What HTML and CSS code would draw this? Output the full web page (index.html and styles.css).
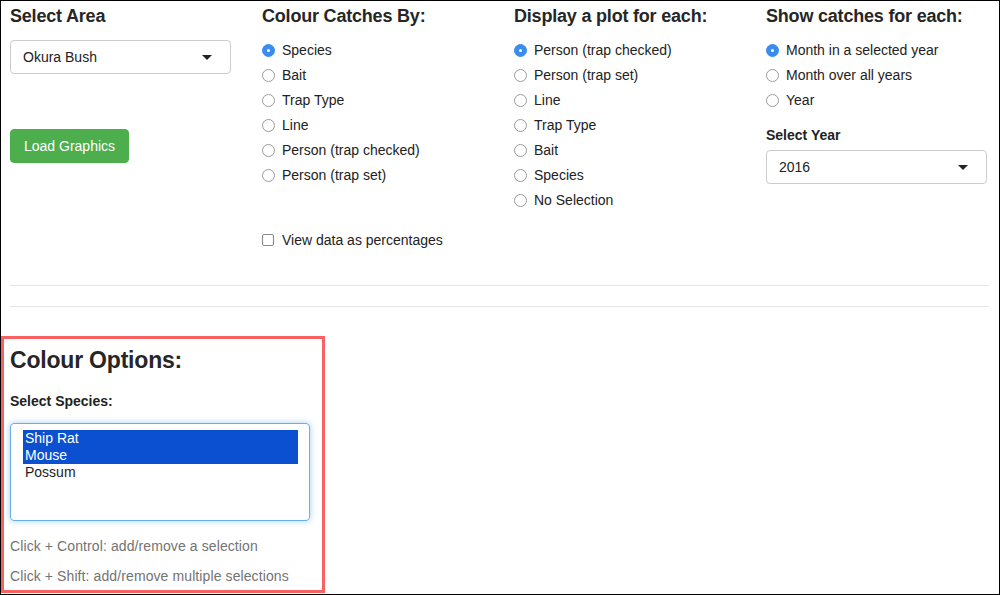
FILE: index.html
```html
<!DOCTYPE html>
<html>
<head>
<meta charset="utf-8">
<link rel="stylesheet" href="styles.css">
</head>
<body>
<div class="frame">
  <div class="controls">
    <div class="col">
      <div class="heading">Select Area</div>
      <div class="select"><span>Okura Bush</span><span class="caret"></span></div>
      <div class="btn">Load Graphics</div>
    </div>
    <div class="col">
      <div class="heading">Colour Catches By:</div>
      <div class="radios">
        <div class="radio"><span class="dot on"></span>Species</div>
        <div class="radio"><span class="dot"></span>Bait</div>
        <div class="radio"><span class="dot"></span>Trap Type</div>
        <div class="radio"><span class="dot"></span>Line</div>
        <div class="radio"><span class="dot"></span>Person (trap checked)</div>
        <div class="radio"><span class="dot"></span>Person (trap set)</div>
      </div>
      <div class="radio check-row"><span class="box"></span>View data as percentages</div>
    </div>
    <div class="col">
      <div class="heading">Display a plot for each:</div>
      <div class="radios">
        <div class="radio"><span class="dot on"></span>Person (trap checked)</div>
        <div class="radio"><span class="dot"></span>Person (trap set)</div>
        <div class="radio"><span class="dot"></span>Line</div>
        <div class="radio"><span class="dot"></span>Trap Type</div>
        <div class="radio"><span class="dot"></span>Bait</div>
        <div class="radio"><span class="dot"></span>Species</div>
        <div class="radio"><span class="dot"></span>No Selection</div>
      </div>
    </div>
    <div class="col">
      <div class="heading">Show catches for each:</div>
      <div class="radios">
        <div class="radio"><span class="dot on"></span>Month in a selected year</div>
        <div class="radio"><span class="dot"></span>Month over all years</div>
        <div class="radio"><span class="dot"></span>Year</div>
      </div>
      <div class="label year-label">Select Year</div>
      <div class="select"><span>2016</span><span class="caret"></span></div>
    </div>
  </div>
  <div class="rule first"></div>
  <div class="rule second"></div>
  <div class="options">
    <div class="big-heading">Colour Options:</div>
    <div class="label species-label">Select Species:</div>
    <div class="listbox">
      <div class="opt sel">Ship Rat</div>
      <div class="opt sel">Mouse</div>
      <div class="opt">Possum</div>
    </div>
    <div class="help">Click + Control: add/remove a selection</div>
    <div class="help second-help">Click + Shift: add/remove multiple selections</div>
  </div>
</div>
</body>
</html>
```

FILE: styles.css
```css
html, body {
  margin: 0;
  padding: 0;
  background: #fff;
}
body {
  font-family: "Liberation Sans", Arial, sans-serif;
  font-size: 14px;
  color: #333;
}
.frame {
  width: 1000px;
  height: 595px;
  box-sizing: border-box;
  border: 1px solid #000;
  overflow: hidden;
}
.controls {
  display: flex;
  padding-left: 9px;
  padding-top: 5px;
  height: 284px;
  box-sizing: border-box;
}
.col {
  width: 252px;
  flex: 0 0 252px;
  display: flex;
  flex-direction: column;
  align-items: flex-start;
}
.heading {
  font-size: 18px;
  font-weight: bold;
  line-height: 20px;
  color: #262626;
  margin-bottom: 14px;
  letter-spacing: -0.2px;
  white-space: nowrap;
}
.select {
  width: 221px;
  height: 34px;
  box-sizing: border-box;
  border: 1px solid #ccc;
  border-radius: 4px;
  display: flex;
  align-items: center;
  justify-content: space-between;
  padding: 0 18px 0 12px;
  color: #222;
}
.caret {
  width: 0;
  height: 0;
  border-left: 5px solid transparent;
  border-right: 5px solid transparent;
  border-top: 5px solid #222;
}
.btn {
  margin-top: 55px;
  height: 34px;
  box-sizing: border-box;
  padding: 0 13px;
  background: #4cae4c;
  border: 1px solid #4cae4c;
  border-radius: 4px;
  color: #fff;
  display: flex;
  align-items: center;
}
.radios {
  display: flex;
  flex-direction: column;
  gap: 5px;
}
.radio {
  height: 20px;
  line-height: 20px;
  display: flex;
  align-items: center;
  color: #222;
  white-space: nowrap;
}
.dot {
  width: 11px;
  height: 11px;
  border: 1px solid #9a9a9a;
  border-radius: 50%;
  margin-right: 7px;
  background: #fff;
  box-sizing: content-box;
  position: relative;
}
.dot.on {
  background: #3b8cf0;
  border-color: #3b8cf0;
}
.dot.on::after {
  content: "";
  position: absolute;
  left: 4px;
  top: 4px;
  width: 3px;
  height: 3px;
  border-radius: 50%;
  background: #fff;
}
.box {
  width: 10px;
  height: 10px;
  border: 1px solid #8a8a8a;
  border-radius: 2px;
  margin-right: 8px;
  background: #fff;
}
.check-row {
  margin-top: 45px;
}
.label {
  font-weight: bold;
  line-height: 20px;
  color: #222;
}
.year-label {
  margin-top: 15px;
  margin-bottom: 5px;
}
.rule {
  height: 1px;
  background: #e5e5e5;
  margin: 0 10px 0 9px;
}
.rule.second {
  margin-top: 20px;
}
.options {
  margin-top: 29px;
  margin-left: 0;
  width: 324px;
  height: 257px;
  box-sizing: border-box;
  border: 3px solid #f86262;
  padding: 5px 0 0 6px;
}
.big-heading {
  font-size: 23px;
  font-weight: bold;
  line-height: 26px;
  color: #262626;
  margin-top: 3px;
  letter-spacing: -0.2px;
}
.species-label {
  margin-top: 18px;
}
.listbox {
  margin-top: 12px;
  width: 300px;
  height: 98px;
  box-sizing: border-box;
  border: 1px solid #66afe9;
  border-radius: 4px;
  box-shadow: 0 0 6px rgba(102, 175, 233, 0.6);
  padding: 6px 11px 0 12px;
}
.opt {
  height: 17px;
  line-height: 17px;
  padding-left: 2px;
  color: #222;
}
.opt.sel {
  background: #0a50d0;
  color: #fff;
}
.help {
  color: #737373;
  margin-top: 15px;
  line-height: 20px;
  letter-spacing: 0.1px;
}
.second-help {
  margin-top: 10px;
}
```
